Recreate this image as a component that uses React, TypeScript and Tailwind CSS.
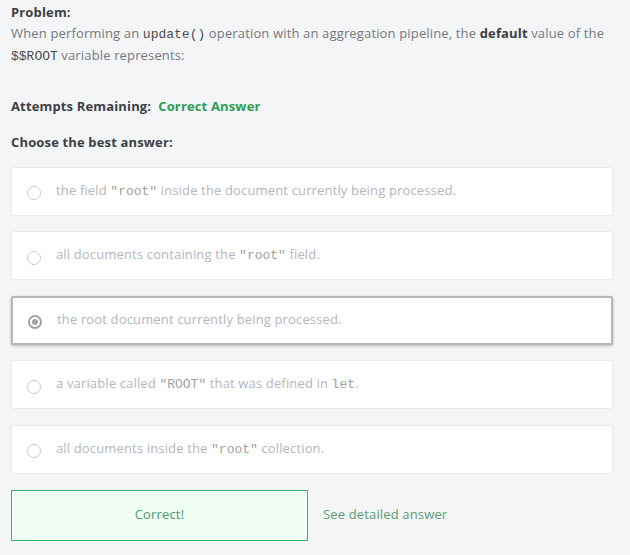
import React, { useState } from 'react';

const mono = "font-['Liberation_Mono',monospace] tracking-normal";

type Option = { id: number; content: React.ReactNode };

const options: Option[] = [
  {
    id: 0,
    content: (
      <>
        the field <code className={`${mono} text-[#a0a0a0]`}>"root"</code> inside the document currently being processed.
      </>
    ),
  },
  {
    id: 1,
    content: (
      <>
        all documents containing the <code className={`${mono} text-[#a0a0a0]`}>"root"</code> field.
      </>
    ),
  },
  { id: 2, content: <>the root document currently being processed.</> },
  {
    id: 3,
    content: (
      <>
        a variable called <code className={`${mono} text-[#a0a0a0]`}>"ROOT"</code> that was defined in{' '}
        <code className={`${mono} text-[#a0a0a0]`}>let</code>.
      </>
    ),
  },
  {
    id: 4,
    content: (
      <>
        all documents inside the <code className={`${mono} text-[#a0a0a0]`}>"root"</code> collection.
      </>
    ),
  },
];

const Radio: React.FC<{ checked: boolean }> = ({ checked }) => (
  <span
    className={`mt-[4px] flex h-[14px] w-[14px] shrink-0 items-center justify-center rounded-full border ${
      checked ? 'border-[#9ea3a8] border-2' : 'border-[#c8cbcf]'
    }`}
  >
    {checked && <span className="h-[6px] w-[6px] rounded-full bg-[#9ea3a8]" />}
  </span>
);

const App: React.FC = () => {
  const [selected, setSelected] = useState(2);

  return (
    <div className="min-h-[555px] w-[630px] bg-[#f4f5f7] px-[11px] pt-[3px] font-['Open_Sans',sans-serif] text-[13px] tracking-[0.15px] text-[#5b5f63]">
      {/* Problem statement */}
      <div className="font-bold text-[#3d4043]">Problem:</div>
      <p className="leading-[21px] text-[#75797d]">
        When performing an <code className={`${mono} text-[#4a4d50]`}>update()</code> operation with an aggregation
        pipeline, the <b className="text-[#3d4043]">default</b> value of the{' '}
        <code className={`${mono} text-[#4a4d50]`}>$$ROOT</code> variable represents:
      </p>

      <div className="mt-[30px] flex gap-[7px] font-bold">
        <span className="text-[#3d4043]">Attempts Remaining:</span>
        <span className="text-[#2e9e55]">Correct Answer</span>
      </div>

      <div className="mt-[17px] font-bold text-[#3d4043]">Choose the best answer:</div>

      {/* Answers */}
      <div className="mt-[14px] flex w-[602px] flex-col gap-[15.5px]">
        {options.map((o) => {
          const active = o.id === selected;
          return (
            <button
              key={o.id}
              onClick={() => setSelected(o.id)}
              className={`flex h-[49px] items-center gap-[15px] rounded-[2px] bg-white pl-[15px] text-left text-[#b3b6b9] ${
                active
                  ? 'border-2 border-[#b4b8bc] pl-[14px] shadow-[0_1px_3px_rgba(0,0,0,0.25)]'
                  : 'border border-[#e8eaec]'
              }`}
            >
              <Radio checked={active} />
              <span>{o.content}</span>
            </button>
          );
        })}
      </div>

      {/* Result */}
      <div className="mt-[16px] flex items-center gap-[15px]">
        <div className="flex h-[51px] w-[297px] items-center justify-center border border-[#3fae6e] bg-[#effdf4] text-[#4a9a6a]">
          Correct!
        </div>
        <a className="cursor-pointer text-[#5a9c72]">See detailed answer</a>
      </div>
    </div>
  );
};

export default App;
